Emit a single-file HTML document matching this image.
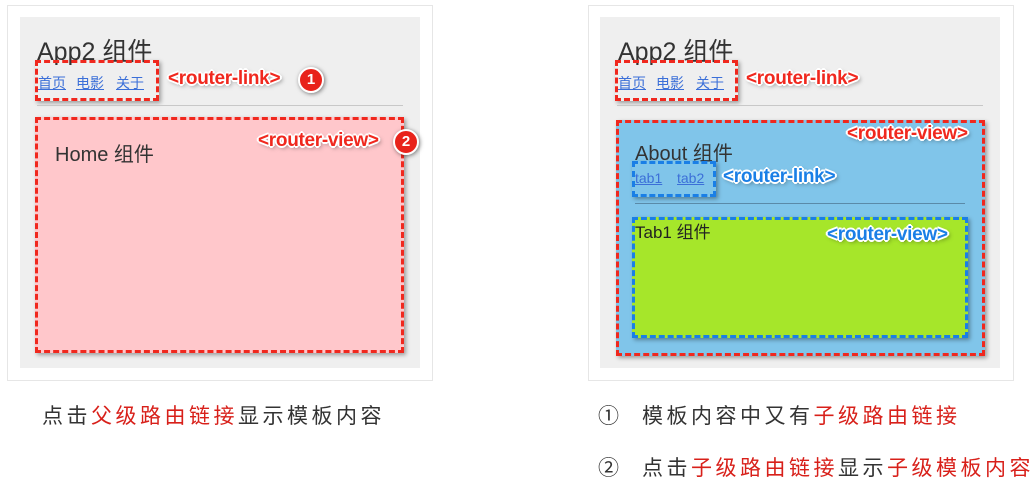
<!DOCTYPE html>
<html><head><meta charset="utf-8"><style>
body{margin:0;width:1036px;height:486px;background:#fff;position:relative;overflow:hidden;font-family:"Liberation Sans","Noto Sans CJK SC",sans-serif;}
.a{position:absolute;}
.card{border:1px solid #e6e6e6;background:#fff;}
.gray{background:#efefef;}
.t{color:#333;white-space:nowrap;}
.lk{color:#3b6fd8;text-decoration:underline;font-size:14px;white-space:nowrap;}
.rd{border:3px dashed #f0281e;box-shadow:2px 2px 4px rgba(0,0,0,.35);}
.bd{border:3px dashed #1a7fe6;box-shadow:2px 2px 4px rgba(0,0,0,.35);}
.hr{height:1px;background:#c8c8c8;}
.tag{font-weight:bold;font-size:19px;letter-spacing:-0.3px;white-space:nowrap;text-shadow:-2px 0 #fff,2px 0 #fff,0 -2px #fff,0 2px #fff,-1px -1px #fff,1px 1px #fff,-1px 1px #fff,1px -1px #fff,2px 2px 4px rgba(0,0,0,.5);}
.red{color:#f0281e}.blue{color:#1a7fe6}
.num{width:22px;height:22px;border-radius:50%;background:#e8231b;border:2px solid #fff;box-shadow:1px 1px 4px rgba(0,0,0,.5);color:#fff;font-weight:bold;font-size:15px;text-align:center;line-height:22px;}
.cap{font-size:21px;letter-spacing:3.5px;color:#333;white-space:nowrap;}
.cap b{font-weight:normal;color:#d8201a}
</style></head><body>
<div class="a card" style="left:7px;top:5px;width:424px;height:374px"></div>
<div class="a gray" style="left:20px;top:17px;width:400px;height:351px"></div>
<div class="a t" style="left:37px;top:32px;font-size:25px">App2 组件</div>
<div class="a lk" style="left:38px;top:73px">首页</div>
<div class="a lk" style="left:76px;top:73px">电影</div>
<div class="a lk" style="left:116px;top:73px">关于</div>
<div class="a rd" style="left:35px;top:60px;width:118px;height:35px"></div>
<div class="a tag red" style="left:168px;top:68px">&lt;router-link&gt;</div>
<div class="a num" style="left:298px;top:67px">1</div>
<div class="a hr" style="left:37px;top:105px;width:366px"></div>
<div class="a rd" style="left:35px;top:117px;width:363px;height:230px;background:#ffc7cb"></div>
<div class="a t" style="left:55px;top:138px;font-size:20px">Home 组件</div>
<div class="a tag red" style="left:258px;top:130px">&lt;router-view&gt;</div>
<div class="a num" style="left:393px;top:129px">2</div>
<div class="a card" style="left:588px;top:5px;width:424px;height:374px"></div>
<div class="a gray" style="left:600px;top:17px;width:400px;height:351px"></div>
<div class="a t" style="left:618px;top:32px;font-size:25px">App2 组件</div>
<div class="a lk" style="left:618px;top:73px">首页</div>
<div class="a lk" style="left:656px;top:73px">电影</div>
<div class="a lk" style="left:696px;top:73px">关于</div>
<div class="a rd" style="left:615px;top:60px;width:117px;height:35px"></div>
<div class="a tag red" style="left:746px;top:68px">&lt;router-link&gt;</div>
<div class="a hr" style="left:617px;top:105px;width:366px"></div>
<div class="a rd" style="left:616px;top:120px;width:363px;height:230px;background:#80c5ea"></div>
<div class="a tag red" style="left:847px;top:123px">&lt;router-view&gt;</div>
<div class="a t" style="left:635px;top:137px;font-size:20px">About 组件</div>
<div class="a lk" style="left:635px;top:170px">tab1</div>
<div class="a lk" style="left:677px;top:170px">tab2</div>
<div class="a bd" style="left:632px;top:161px;width:78px;height:30px"></div>
<div class="a tag blue" style="left:723px;top:166px">&lt;router-link&gt;</div>
<div class="a" style="left:635px;top:203px;width:330px;height:1px;background:#5a8aa8"></div>
<div class="a bd" style="left:632px;top:217px;width:330px;height:115px;background:#a6e62a"></div>
<div class="a t" style="left:635px;top:218px;font-size:17px;color:#222">Tab1 组件</div>
<div class="a tag blue" style="left:827px;top:224px">&lt;router-view&gt;</div>
<div class="a cap" style="left:42px;top:400px">点击<b>父级路由链接</b>显示模板内容</div>
<div class="a cap" style="left:598px;top:400px">①</div>
<div class="a cap" style="left:642px;top:400px">模板内容中又有<b>子级路由链接</b></div>
<div class="a cap" style="left:598px;top:452px">②</div>
<div class="a cap" style="left:642px;top:452px">点击<b>子级路由链接</b>显示<b>子级模板内容</b></div>
</body></html>
